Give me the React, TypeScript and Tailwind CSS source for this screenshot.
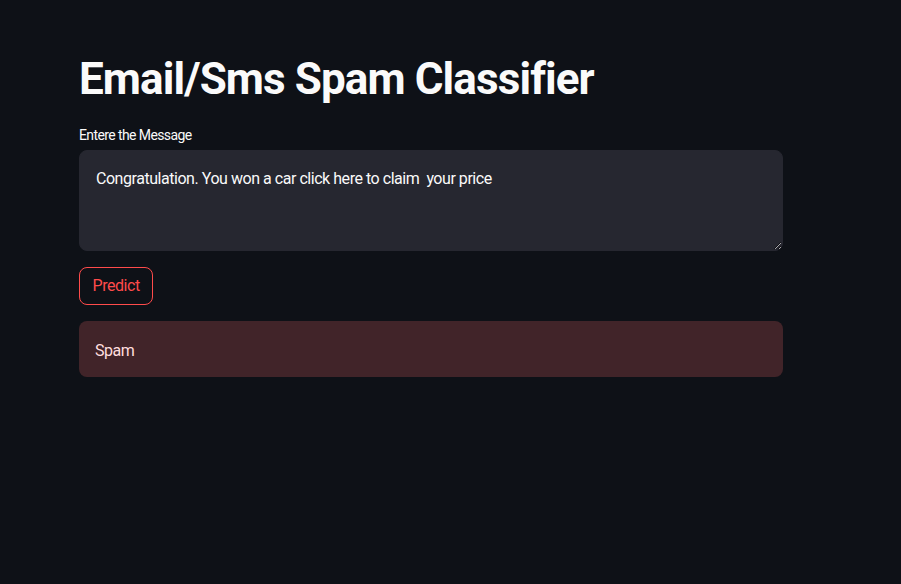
import React from "react";

export default function App() {
  const font = { fontFamily: "Roboto, 'Noto Sans', sans-serif" };
  return (
    <div className="min-h-screen w-full bg-[#0e1117] pt-[53px]" style={font}>
      <div className="ml-[79px] flex w-[704px] flex-col">
        <h1 className="text-[44px] font-bold leading-[1.2] tracking-[-0.9px] text-[#fafafa]">
          Email/Sms Spam Classifier
        </h1>
        <label className="mt-[19px] text-[14px] leading-[20px] tracking-[-0.6px] text-[#fafafa]">
          Entere the Message
        </label>
        <textarea
          readOnly
          className="mt-[5px] h-[101px] w-full resize-y rounded-lg border border-[#262730] bg-[#262730] px-4 pt-[15px] pb-4 text-[16px] leading-[26px] tracking-[-0.46px] text-[#fafafa] outline-none"
          style={font}
          defaultValue="Congratulation. You won a car click here to claim  your price"
        />
        <div className="mt-4">
          <button className="h-[38px] rounded-lg border border-[#ff4b4b] px-[12.5px] text-[16px] tracking-[-0.45px] text-[#ff4b4b]">
            Predict
          </button>
        </div>
        <div className="mt-4 rounded-lg bg-[#412429] px-4 pt-[18px] pb-[14px] text-[16px] leading-[24px] tracking-[-0.45px] text-[#ffdede]">
          Spam
        </div>
      </div>
    </div>
  );
}
